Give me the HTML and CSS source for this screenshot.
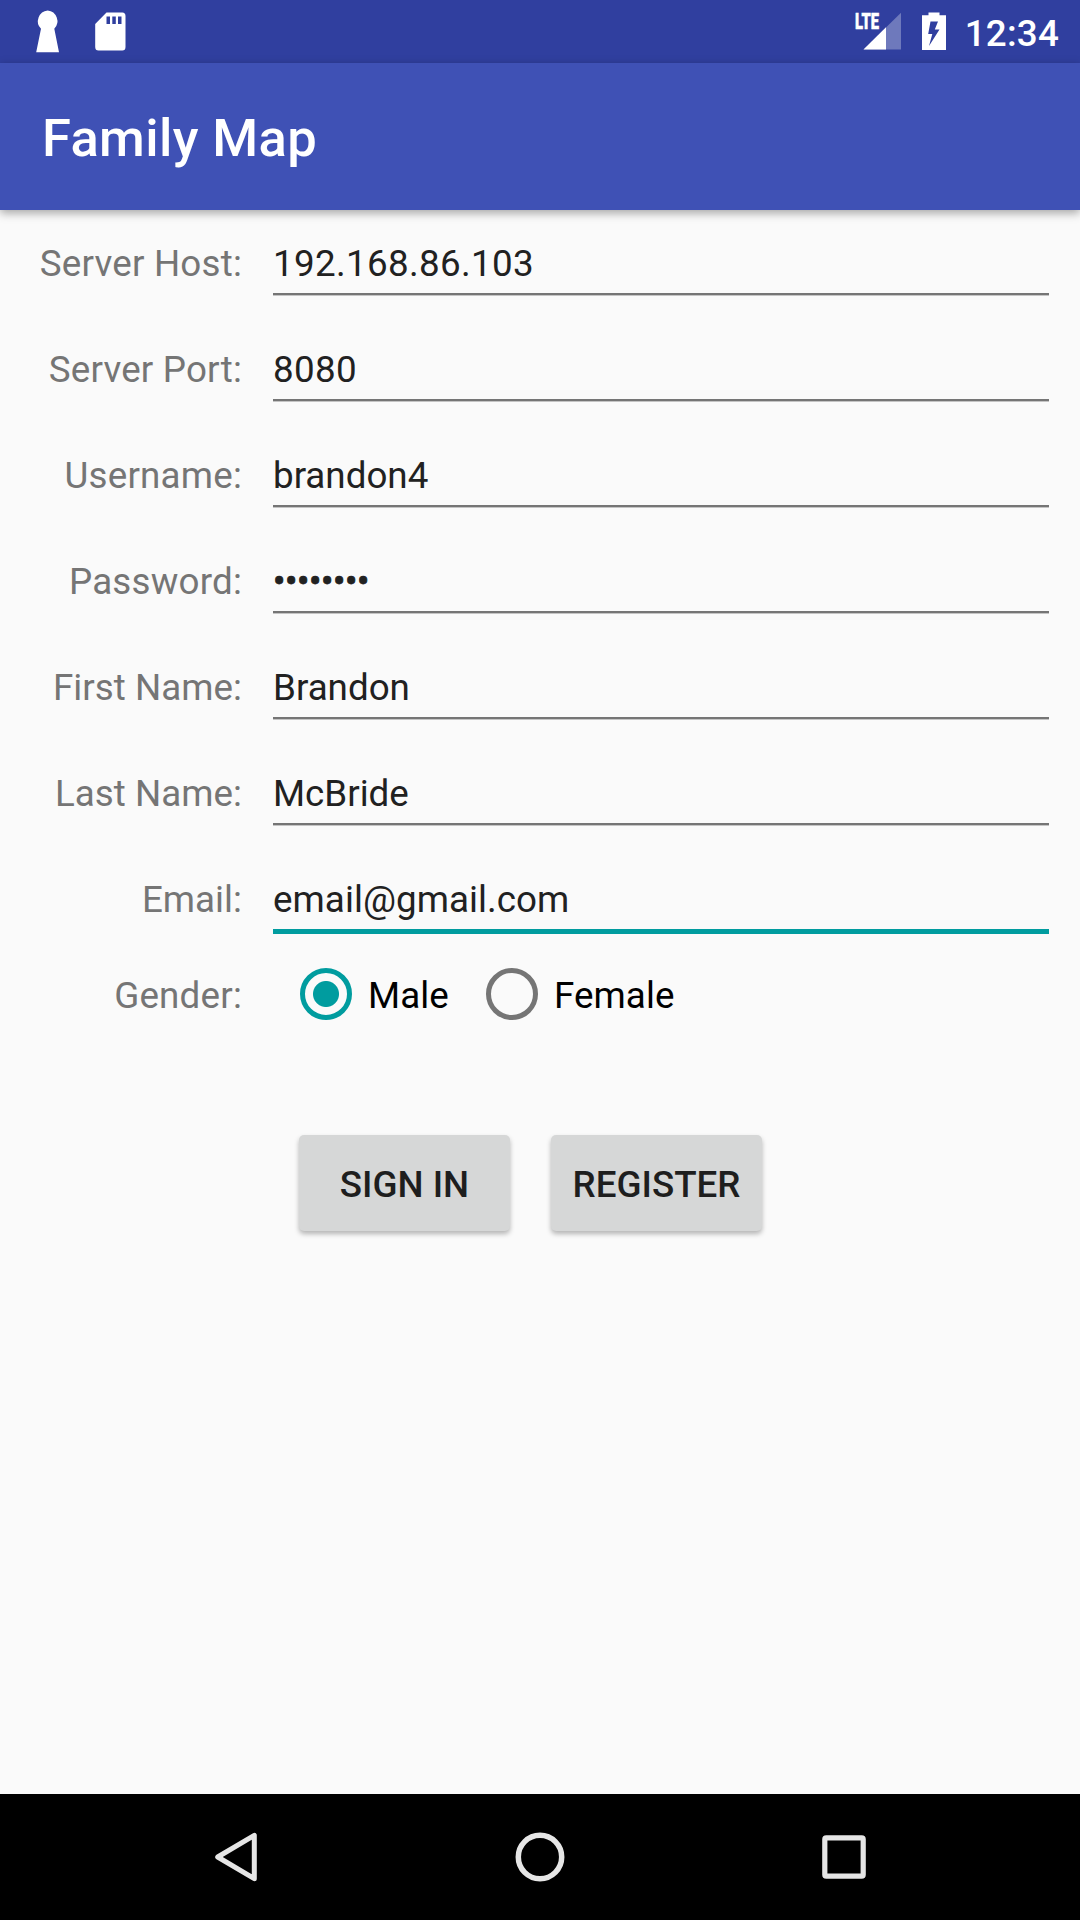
FILE: index.html
```html
<!DOCTYPE html>
<html lang="en">
<head>
<meta charset="utf-8">
<title>Family Map</title>
<link rel="stylesheet" href="styles.css">
</head>
<body>
<div class="screen">
  <header class="status-bar">
    <div class="notifications">
      <svg class="icon-key" width="24" height="44" viewBox="0 0 24 44"><path fill="#fff" d="M11.7 1.500a10.800 10.800 0 0 1 6.600 18.300L23 43.300H.2L5 19.800A10.800 10.800 0 0 1 11.700 1.500z"/></svg>
      <svg class="icon-sd" width="32" height="40" viewBox="0 0 32 40"><path fill="#fff" fill-rule="evenodd" d="M11.500 .5H27.300Q30.500 .5 30.500 4V35Q30.500 38.500 27.300 38.500H3.500Q.2 38.500 .2 35V12zM11.500 4.500V12H15V4.500zM17.300 4.500V12H20.800V4.500zM23 4.500V12H26.500V4.500z"/></svg>
    </div>
    <div class="system">
      <svg class="icon-signal" width="50" height="44" viewBox="-2 -4 50 44"><path fill="#fff" fill-opacity=".3" d="M46 .8V37.500H8.500z"/><path fill="#fff" d="M31 15.200V37.500H8.500z"/><text class="lte" x="0" y="17.300" textLength="24" lengthAdjust="spacingAndGlyphs">LTE</text></svg>
      <svg class="icon-battery" width="24" height="40" viewBox="0 0 24 40"><path fill="#fff" fill-rule="evenodd" d="M6.500 .5H17.500V3.300H24V38H0V3.300H6.500zM8.500 9.500L6.200 22H10.300L7 34L17.500 17.500H12.800L16 9.500z"/></svg>
      <span class="clock">12:34</span>
    </div>
  </header>
  <div class="app-bar"><h1>Family Map</h1></div>

  <main class="form">
    <div class="row"><span class="label">Server Host:</span><span class="field numeric">192.168.86.103</span></div>
    <div class="row"><span class="label">Server Port:</span><span class="field numeric">8080</span></div>
    <div class="row"><span class="label">Username:</span><span class="field">brandon4</span></div>
    <div class="row"><span class="label">Password:</span><span class="field password">••••••••</span></div>
    <div class="row"><span class="label plain">First Name:</span><span class="field">Brandon</span></div>
    <div class="row"><span class="label plain">Last Name:</span><span class="field">McBride</span></div>
    <div class="row"><span class="label plain">Email:</span><span class="field focused">email@gmail.com</span></div>
    <div class="row gender">
      <span class="label">Gender:</span>
      <div class="options">
        <span class="option"><i class="radio checked"></i>Male</span>
        <span class="option"><i class="radio"></i>Female</span>
      </div>
    </div>
    <div class="actions">
      <button class="button">SIGN IN</button>
      <button class="button">REGISTER</button>
    </div>
  </main>

  <nav class="nav-bar">
    <svg width="50" height="54" viewBox="0 0 50 54"><path d="M44.300 5.300V48.700L7.700 27z" fill="none" stroke="#e6e6e6" stroke-width="5" stroke-linejoin="round"/></svg>
    <svg class="home" width="54" height="54" viewBox="0 0 54 54"><circle cx="27" cy="27" r="21.700" fill="none" stroke="#e6e6e6" stroke-width="5.500"/></svg>
    <svg width="54" height="54" viewBox="0 0 54 54"><rect x="7.800" y="7.800" width="38.400" height="38.400" rx="1.500" fill="none" stroke="#e6e6e6" stroke-width="5.200"/></svg>
  </nav>
</div>
</body>
</html>
```
FILE: styles.css
```css
* { box-sizing: border-box; }
body { margin: 0; font-family: Roboto, sans-serif; }
svg { display: block; flex: none; }

.screen {
  width: 1080px;
  height: 1920px;
  display: flex;
  flex-direction: column;
  background: #fafafa;
  font-size: 36.75px;
  line-height: 43px;
  overflow: hidden;
}

.status-bar {
  height: 63px;
  padding: 0 21px 0 36px;
  display: flex;
  justify-content: space-between;
  align-items: flex-start;
  background: #303f9f;
  color: #fff;
}
.notifications, .system { display: flex; align-items: flex-start; }
.icon-key { margin-top: 9px; }
.icon-sd { margin: 12px 0 0 35px; }
.icon-signal { margin: 8px 19px 0 0; }
.icon-battery { margin: 12px 19px 0 0; }
.lte { font: 900 22px Roboto, sans-serif; fill: #fff; stroke: #fff; stroke-width: .5px; }
.clock { margin-top: 12px; font-weight: 500; letter-spacing: .2px; }

.app-bar {
  height: 147px;
  padding: 2px 0 0 42px;
  display: flex;
  align-items: center;
  background: #3f51b5;
  box-shadow: 0 3px 9px rgba(0, 0, 0, .35);
  color: #fff;
}
.app-bar h1 { margin: 0; font-size: 52.5px; line-height: 62px; font-weight: 500; letter-spacing: .38px; }

.form { flex: 1; padding-right: 31px; }
.row { height: 106px; padding-top: 32px; display: flex; align-items: flex-start; }
.label { width: 242px; margin-right: 31px; text-align: right; color: #757575; letter-spacing: .2px; }
.label.plain { letter-spacing: .04px; }
.field {
  flex: 1;
  height: 53px;
  border-bottom: 2px solid #757575;
  box-shadow: 0 1px #c4c4c4;
  color: #212121;
}
.field.numeric { letter-spacing: .33px; }
.field.password { letter-spacing: -.4px; -webkit-text-stroke: .8px #212121; }
.field.focused { height: 56px; border-bottom: 5px solid #009c9f; box-shadow: none; letter-spacing: .06px; }

.gender { height: 150px; padding-top: 22px; }
.options { display: flex; gap: 37px; padding-left: 27px; color: #000; letter-spacing: .1px; }
.option { display: flex; align-items: flex-start; }
.radio {
  width: 52px;
  height: 52px;
  margin: -6px 16px 0 0;
  border: 5px solid #757575;
  border-radius: 50%;
}
.checked { border-color: #009c9f; background: radial-gradient(circle, #009c9f 12.5px, transparent 13.5px); }

.actions { display: flex; gap: 41px; padding: 33px 0 0 299px; }
.button {
  width: 211px;
  height: 96px;
  padding: 2px 0 0;
  border: 0;
  border-radius: 5px;
  background: #d6d7d7;
  box-shadow: 0 3px 5px rgba(0, 0, 0, .28);
  color: #1e1e1e;
  font: 500 36.75px/43px Roboto, sans-serif;
}

.nav-bar {
  height: 126px;
  padding: 0 209px 0 210px;
  display: flex;
  justify-content: space-between;
  align-items: center;
  background: #000;
}
.home { margin-left: 3px; }
```
